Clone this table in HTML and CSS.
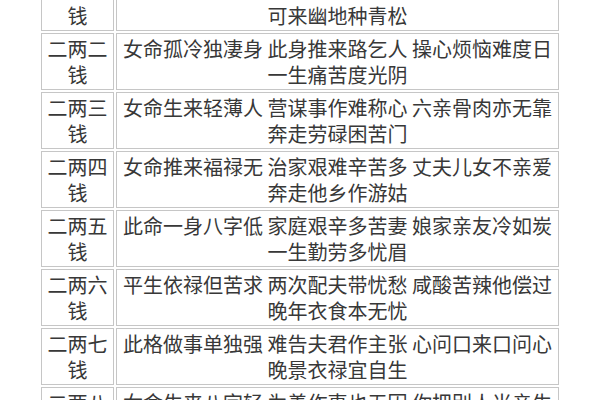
FILE: index.html
```html
<!DOCTYPE html>
<html lang="zh-CN">
<head>
<meta charset="utf-8">
<title>称骨歌</title>
<link rel="stylesheet" href="styles.css">
</head>
<body>
<table class="bone-table">
  <tbody>
    <tr>
      <td class="weight">二两一<br>钱</td>
      <td class="verse">女命生来运气低 得人恩处反成仇 莫向故乡求事业<br>可来幽地种青松</td>
    </tr>
    <tr>
      <td class="weight">二两二<br>钱</td>
      <td class="verse">女命孤冷独凄身 此身推来路乞人 操心烦恼难度日<br>一生痛苦度光阴</td>
    </tr>
    <tr>
      <td class="weight">二两三<br>钱</td>
      <td class="verse">女命生来轻薄人 营谋事作难称心 六亲骨肉亦无靠<br>奔走劳碌困苦门</td>
    </tr>
    <tr>
      <td class="weight">二两四<br>钱</td>
      <td class="verse">女命推来福禄无 治家艰难辛苦多 丈夫儿女不亲爱<br>奔走他乡作游姑</td>
    </tr>
    <tr>
      <td class="weight">二两五<br>钱</td>
      <td class="verse">此命一身八字低 家庭艰辛多苦妻 娘家亲友冷如炭<br>一生勤劳多忧眉</td>
    </tr>
    <tr>
      <td class="weight">二两六<br>钱</td>
      <td class="verse">平生依禄但苦求 两次配夫带忧愁 咸酸苦辣他偿过<br>晚年衣食本无忧</td>
    </tr>
    <tr>
      <td class="weight">二两七<br>钱</td>
      <td class="verse">此格做事单独强 难告夫君作主张 心问口来口问心<br>晚景衣禄宜自生</td>
    </tr>
    <tr>
      <td class="weight">二两八<br>钱</td>
      <td class="verse">女命生来八字轻 为善作事也无因 你把别人当亲生<br>别人待你未必真</td>
    </tr>
  </tbody>
</table>
</body>
</html>
```

FILE: styles.css
```css
html, body {
  margin: 0;
  padding: 0;
  background: #ffffff;
}

body {
  font-family: "Noto Sans CJK SC", "Noto Sans", sans-serif;
  color: #383838;
  overflow: hidden;
}

.bone-table {
  margin: -28px auto 0;
  border-collapse: separate;
  border-spacing: 2px;
  font-size: 20px;
  line-height: 26px;
}

.bone-table td {
  border: 1px solid #c6c6c6;
  padding: 2px 0 1px;
  text-align: center;
  vertical-align: middle;
  white-space: nowrap;
}

.weight {
  width: 71px;
}

.verse {
  width: 441px;
}
```
